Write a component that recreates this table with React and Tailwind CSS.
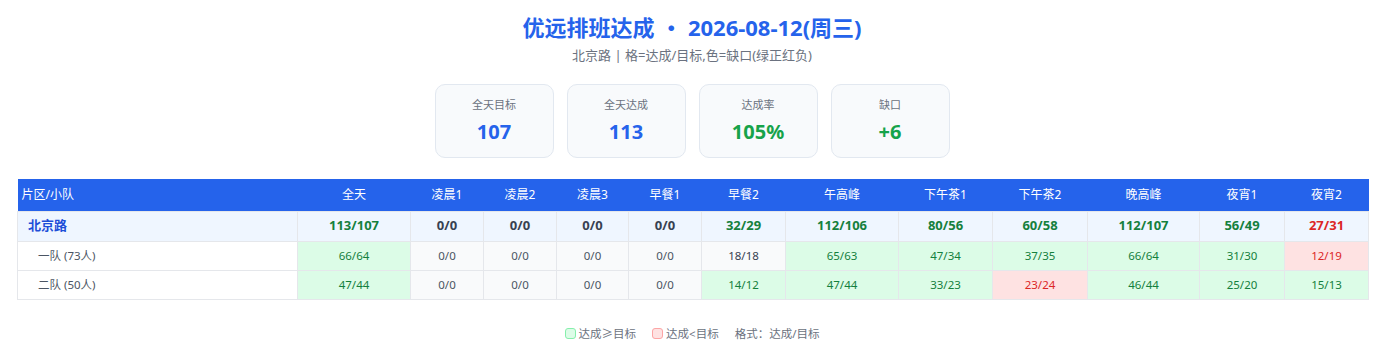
import React from 'react'

const cols = [
  { name: '全天', w: 'w-[113px]' },
  { name: '凌晨1', w: 'w-[73px]' },
  { name: '凌晨2', w: 'w-[73px]' },
  { name: '凌晨3', w: 'w-[72px]' },
  { name: '早餐1', w: 'w-[73px]' },
  { name: '早餐2', w: 'w-[84px]' },
  { name: '午高峰', w: 'w-[113px]' },
  { name: '下午茶1', w: 'w-[94px]' },
  { name: '下午茶2', w: 'w-[95px]' },
  { name: '晚高峰', w: 'w-[112px]' },
  { name: '夜宵1', w: 'w-[85px]' },
  { name: '夜宵2', w: 'w-[84px]' },
]

const area = { name: '北京路', cells: [[113, 107], [0, 0], [0, 0], [0, 0], [0, 0], [32, 29], [112, 106], [80, 56], [60, 58], [112, 107], [56, 49], [27, 31]] }

const teams = [
  { name: '一队 (73人)', cells: [[66, 64], [0, 0], [0, 0], [0, 0], [0, 0], [18, 18], [65, 63], [47, 34], [37, 35], [66, 64], [31, 30], [12, 19]] },
  { name: '二队 (50人)', cells: [[47, 44], [0, 0], [0, 0], [0, 0], [0, 0], [14, 12], [47, 44], [33, 23], [23, 24], [46, 44], [25, 20], [15, 13]] },
]

const stats = [
  { label: '全天目标', value: '107', color: 'text-[#2563eb]' },
  { label: '全天达成', value: '113', color: 'text-[#2563eb]' },
  { label: '达成率', value: '105%', color: 'text-[#16a34a]' },
  { label: '缺口', value: '+6', color: 'text-[#16a34a]' },
]

function areaColor([done, target]) {
  if (done === 0 && target === 0) return 'text-[#374151]'
  return done >= target ? 'text-[#15803d]' : 'text-[#dc2626]'
}

function teamCell([done, target]) {
  if (done === 0 && target === 0) return 'bg-[#f9fafb] text-[#4b5563]'
  if (done === target && done === 18) return 'bg-[#f9fafb] text-[#374151]'
  return done >= target ? 'bg-[#dcfce7] text-[#15803d]' : 'bg-[#fee2e2] text-[#dc2626]'
}

export default function App() {
  return (
    <div className="w-[1384px] h-[357px] bg-white px-4 pt-[11px] font-['Noto_Sans','Noto_Sans_CJK_SC',sans-serif]">
      <h1 className="text-center text-[22px] leading-[32px] font-bold text-[#2563eb]">
        优远排班达成 ・ 2026-08-12(周三)
      </h1>
      <p className="mt-[3px] text-center text-[13px] leading-[18px] text-[#6b7280]">
        北京路 | 格=达成/目标,色=缺口(绿正红负)
      </p>

      <div className="mt-[20px] flex justify-center gap-[13px]">
        {stats.map((s) => (
          <div
            key={s.label}
            className="w-[119px] h-[74px] rounded-[10px] border border-[#e2e8f0] bg-[#f8fafc] flex flex-col items-center pt-[12px]"
          >
            <div className="text-[11px] leading-[16px] text-[#6b7280]">{s.label}</div>
            <div className={`mt-[5px] text-[20px] leading-[28px] font-bold ${s.color}`}>{s.value}</div>
          </div>
        ))}
      </div>

      <table className="mt-[21px] w-[1351px] ml-px table-fixed border-collapse text-[12px]">
        <colgroup>
          <col className="w-[280px]" />
          {cols.map((c) => (
            <col key={c.name} className={c.w} />
          ))}
        </colgroup>
        <thead>
          <tr className="h-[32px] bg-[#2563eb] text-white">
            <th className="pl-[4px] text-left font-normal">片区/小队</th>
            {cols.map((c) => (
              <th key={c.name} className="font-normal">{c.name}</th>
            ))}
          </tr>
        </thead>
        <tbody>
          <tr className="h-[30px] bg-[#eff6ff] text-[13px] font-bold">
            <td className="border border-[#e5e7eb] pl-[10px] text-[#1d4ed8]">{area.name}</td>
            {area.cells.map((c, i) => (
              <td key={i} className={`border border-[#e5e7eb] text-center ${areaColor(c)}`}>
                {c[0]}/{c[1]}
              </td>
            ))}
          </tr>
          {teams.map((t) => (
            <tr key={t.name} className="h-[29px] text-[11.5px]">
              <td className="border border-[#e5e7eb] bg-white pl-[20px] text-[#4b5563]">{t.name}</td>
              {t.cells.map((c, i) => (
                <td key={i} className={`border border-[#e5e7eb] text-center ${teamCell(c)}`}>
                  {c[0]}/{c[1]}
                </td>
              ))}
            </tr>
          ))}
        </tbody>
      </table>

      <div className="mt-[26px] flex justify-center items-center gap-[16px] text-[11.5px] leading-[16px] text-[#6b7280]">
        <span className="flex items-center gap-[3px]">
          <span className="inline-block w-[11px] h-[11px] rounded-[3px] border border-[#86efac] bg-[#dcfce7]" />
          达成≥目标
        </span>
        <span className="flex items-center gap-[3px]">
          <span className="inline-block w-[11px] h-[11px] rounded-[3px] border border-[#fca5a5] bg-[#fee2e2]" />
          达成&lt;目标
        </span>
        <span>格式：达成/目标</span>
      </div>
    </div>
  )
}
